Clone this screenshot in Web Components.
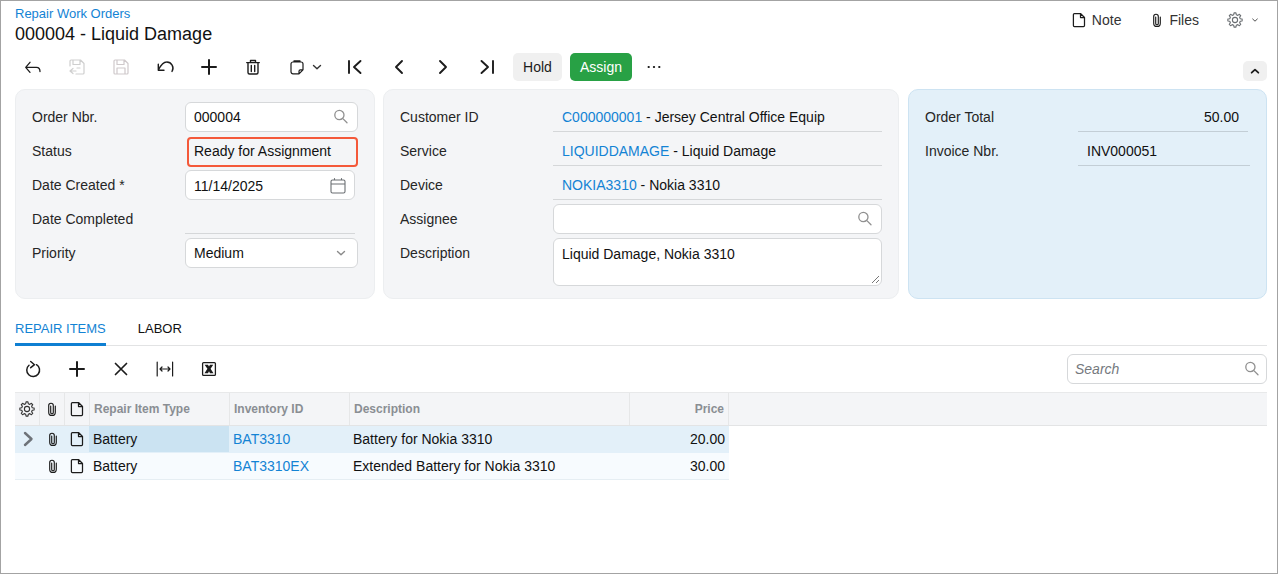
<!DOCTYPE html>
<html lang="en"><head><meta charset="utf-8"><title>Repair Work Orders</title>
<style>
html,body{margin:0;padding:0;background:#fff}
body{font:14px/18px "Liberation Sans",Arial,sans-serif;color:#1c1c1c}
</style></head><body>
<x-app>
  <x-header slot="header"></x-header>
  <x-toolbar slot="toolbar"></x-toolbar>
  <x-summary slot="summary"></x-summary>
  <x-tabs slot="tabs"></x-tabs>
  <x-grid-toolbar slot="gridbar"></x-grid-toolbar>
  <x-grid slot="grid"></x-grid>
</x-app>
<script>
const gear=(()=>{let d='';const n=8,c=12,R=7.2,r=5.4;for(let i=0;i<n;i++){const a=i*2*Math.PI/n;const w=Math.PI/n;
const pts=[[r,a-w*.62],[R,a-w*.34],[R,a+w*.34],[r,a+w*.62]];
pts.forEach((p,j)=>{const x=(c+p[0]*Math.cos(p[1])).toFixed(2),y=(c+p[0]*Math.sin(p[1])).toFixed(2);d+=(i==0&&j==0?'M':'L')+x+' '+y+' ';});}
return d+'Z M14.6 12a2.6 2.6 0 1 1-5.2 0a2.6 2.6 0 1 1 5.2 0Z';})();
const ICONS={
 back:{d:'M9 7.3 L4.7 12.3 L9 17.3 M4.7 12.3 H15.5 Q19 12.3 19 16.5',w:1.3},
 saveclose:{d:'M11 19 H18 A1 1 0 0 0 19 18 V8.5 L15.5 5 H6 A1 1 0 0 0 5 6 V11 M8 5 V9.5 H15 V5 M12 13 H15 M8 13.5 L5 16 L8 18.5 M5 16 H11',w:1.2},
 save:{d:'M6 19 H18 A1 1 0 0 0 19 18 V8.5 L15.5 5 H6 A1 1 0 0 0 5 6 V18 A1 1 0 0 0 6 19Z M8 5 V9.5 H15 V5 M8 19 V13 H16 V19',w:1.2},
 undo:{d:'M19 16.5 A6.2 6.2 0 0 0 13.5 7 C10.5 7 8 10 5.6 14.5 M5.3 9.3 V15.3 H11',w:1.4},
 plus:{d:'M12 5 V19 M5 12 H19',w:2},
 trash:{d:'M7 8.5 V17.5 A1.5 1.5 0 0 0 8.5 19 H15.5 A1.5 1.5 0 0 0 17 17.5 V8.5 M5.7 7.6 H18.3 M9.5 7.6 V5.5 H14.5 V7.6 M10.3 10.5 V16.5 M13.7 10.5 V16.5',w:1.4},
 paste:{d:'M8 7 H16 A2 2 0 0 1 18 9 V14.8 L14 18.8 H8 A2 2 0 0 1 6 16.8 V9 A2 2 0 0 1 8 7 Z M9 7 V5.8 H15 V7 M14 18.8 V16.2 A1.4 1.4 0 0 1 15.4 14.8 H18',w:1.2},
 chev:{d:'M8.5 10.5 L12 13.8 L15.5 10.5',w:1.4},
 first:{d:'M6 6 V18 M17.5 6 L11 12 L17.5 18',w:1.9},
 prev:{d:'M15 6 L9 12 L15 18',w:1.9},
 next:{d:'M9 6 L15 12 L9 18',w:1.9},
 last:{d:'M18 6 V18 M6.5 6 L13 12 L6.5 18',w:1.9},
 dots:{d:'M6.5 12 h.4 M11.8 12 h.4 M17.1 12 h.4',w:1.9},
 up:{d:'M8 14 L12 10.4 L16 14',w:2.2},
 search:{d:'M13.9 13.6 L18 17.7 M15 10 A4.6 4.6 0 1 1 5.8 10 A4.6 4.6 0 1 1 15 10Z',w:1.3},
 cal:{d:'M6.5 6 H17.5 A1.5 1.5 0 0 1 19 7.5 V17.5 A1.5 1.5 0 0 1 17.5 19 H6.5 A1.5 1.5 0 0 1 5 17.5 V7.5 A1.5 1.5 0 0 1 6.5 6Z M5 10 H19 M8.5 4.5 V6 M15.5 4.5 V6',w:1.1},
 refresh:{d:'M15.5 7.7 A6.4 6.4 0 1 1 8 8.3 M9.7 4.5 L13.5 7.7 L9.7 10.7',w:1.5},
 close:{d:'M6.5 6.5 L17.5 17.5 M17.5 6.5 L6.5 17.5',w:1.7},
 fit:{d:'M4.2 5 V19 M19.6 5 V19 M7 12 H17 M9 10 L7 12 L9 14 M15 10 L17 12 L15 14',w:1.2},
 clip:{d:'M10.7 9 V15.5 a1.3 1.3 0 0 0 2.6 0 V8.5 a2.3 2.3 0 0 0 -4.6 0 V15.2 a3.3 3.3 0 0 0 6.6 0 V9',w:1.15},
 note:{d:'M7.4 5.5 H13.5 L17.5 9.5 V17.5 A1 1 0 0 1 16.5 18.5 H7.4 A1 1 0 0 1 6.4 17.5 V6.5 A1 1 0 0 1 7.4 5.5Z M13.5 5.5 V9.5 H17.5',w:1.25},
 gear:{d:gear,w:1.1},
 rowchev:{d:'M9 6 L15.5 12 L9 18',w:2.4}
};
class XIcon extends HTMLElement{connectedCallback(){
 const i=ICONS[this.getAttribute('name')],s=this.getAttribute('size')||24,c=this.getAttribute('color')||'#1c1c1c';
 this.attachShadow({mode:'open'}).innerHTML=`<style>:host{display:inline-flex;width:${s}px;height:${s}px;flex:none}svg{display:block}</style><svg width="${s}" height="${s}" viewBox="0 0 24 24"><path d="${i.d}" fill="none" stroke="${c}" stroke-width="${i.w}" stroke-linecap="round" stroke-linejoin="round"/></svg>`;
}}
class XExcel extends HTMLElement{connectedCallback(){this.attachShadow({mode:'open'}).innerHTML=`<style>:host{display:inline-flex;width:24px;height:24px}</style><svg width="24" height="24" viewBox="0 0 24 24"><rect x="5.6" y="5.6" width="12.8" height="12.8" rx="1" fill="#fff" stroke="#1c1c1c" stroke-width="1.3"/><path d="M7.6 7.8 H11 L12 9.6 L13 7.8 H16.2 L13.6 11.8 L16.5 16.2 H13 L12 14.2 L11 16.2 H7.5 L10.4 11.8 Z" fill="#1c1c1c"/></svg>`}}
customElements.define('x-icon',XIcon);customElements.define('x-excel',XExcel);

class XApp extends HTMLElement{constructor(){super();this.attachShadow({mode:'open'}).innerHTML=`<style>
:host{display:block;box-sizing:border-box;width:1278px;height:574px;border:1px solid #a3a3a3;padding:0 10px 0 14px;overflow:hidden}
.sum{display:block;margin-top:8px}
</style><slot name="header"></slot><slot name="toolbar"></slot><div class="sum"><slot name="summary"></slot></div><slot name="tabs"></slot><slot name="gridbar"></slot><slot name="grid"></slot>`}}
customElements.define('x-app',XApp);

class XHeader extends HTMLElement{constructor(){super();this.attachShadow({mode:'open'}).innerHTML=`<style>
:host{display:flex;justify-content:space-between;height:52px}
.crumb{font-size:13px;line-height:16px;color:#1383d4;margin-top:5px}
h1{font-size:18px;line-height:24px;font-weight:400;margin:0;color:#111}
.r{display:flex;align-items:center;height:24px;margin-top:7px;margin-right:4px}
.i{display:flex;align-items:center;color:#333}
</style><div><div class="crumb">Repair Work Orders</div><h1>000004 - Liquid Damage</h1></div>
<div class="r"><span class="i" style="margin-right:24px"><x-icon name="note"></x-icon><span style="margin-left:1px">Note</span></span>
<span class="i" style="margin-right:24px"><x-icon name="clip"></x-icon><span>Files</span></span>
<x-icon name="gear" color="#6a6e72"></x-icon><x-icon name="chev" size="16" color="#444"></x-icon></div>`}}
customElements.define('x-header',XHeader);

const BTN=`.b{width:44px;height:28px;display:flex;align-items:center;justify-content:center;flex:none}`;
class XToolbar extends HTMLElement{constructor(){super();this.attachShadow({mode:'open'}).innerHTML=`<style>
:host{display:flex;align-items:center;height:28px;margin-left:-4px}
${BTN}
.t{height:28px;box-sizing:border-box;border-radius:5px;display:flex;align-items:center;justify-content:center;background:#f0f0f0;color:#1c1c1c}
.g{background:#28a145;color:#fff}
.up{width:24px;height:20px;margin-top:8px;margin-left:auto;background:#f0f0f0;border-radius:5px;display:flex;align-items:center;justify-content:center}
</style>
<div class="b"><x-icon name="back"></x-icon></div>
<div class="b"><x-icon name="saveclose" color="#cfcfcf"></x-icon></div>
<div class="b"><x-icon name="save" color="#cfc9cb"></x-icon></div>
<div class="b"><x-icon name="undo"></x-icon></div>
<div class="b"><x-icon name="plus"></x-icon></div>
<div class="b"><x-icon name="trash"></x-icon></div>
<div class="b" style="width:58px;justify-content:flex-start;padding-left:10px;box-sizing:border-box"><x-icon name="paste"></x-icon><x-icon name="chev" color="#333" style="margin-left:-4px"></x-icon></div>
<div class="b"><x-icon name="first"></x-icon></div>
<div class="b"><x-icon name="prev"></x-icon></div>
<div class="b"><x-icon name="next"></x-icon></div>
<div class="b"><x-icon name="last"></x-icon></div>
<div class="t" style="width:49px;margin-left:4px">Hold</div>
<div class="t g" style="width:62px;margin-left:8px">Assign</div>
<div class="b"><x-icon name="dots"></x-icon></div>
<div class="up"><x-icon name="up" size="20"></x-icon></div>`}}
customElements.define('x-toolbar',XToolbar);

class XPanel extends HTMLElement{constructor(){super();this.attachShadow({mode:'open'}).innerHTML=`<style>
:host{display:block;box-sizing:border-box;height:210px;background:#f4f5f7;border:1px solid #eceef0;border-radius:10px;padding:10px 16px}
:host([blue]){background:#e3f0f9;border-color:#cde3f2}
</style><slot></slot>`}}
customElements.define('x-panel',XPanel);

class XField extends HTMLElement{constructor(){super();this.attachShadow({mode:'open'}).innerHTML=`<style>
:host{display:grid;grid-template-columns:153px 1fr;min-height:34px;color:#262626}
.l{line-height:34px;height:34px}
.v{min-width:0;color:#111}
</style><div class="l"></div><div class="v"><slot></slot></div>`}
connectedCallback(){this.shadowRoot.querySelector('.l').textContent=this.getAttribute('label')}}
customElements.define('x-field',XField);

class XBox extends HTMLElement{constructor(){super();this.attachShadow({mode:'open'}).innerHTML=`<style>
:host{display:flex;align-items:center;justify-content:space-between;box-sizing:border-box;height:30px;margin-top:2px;background:#fff;border:1px solid #d6d8da;border-radius:6px;padding:0 8px;color:#111}
:host([line]){background:none;border:0;border-bottom:1px solid #d5d7d9;border-radius:0;padding:0 9px;height:30px;justify-content:flex-start;white-space:pre}
:host([line][dark]){border-bottom-color:#c3ced6}
:host([status]){border:2px solid #f4593a;margin:3px 0 0 2px;padding:0 5px 2px;background:#f4f5f7;border-radius:4px}
:host([date]){padding-top:1px}
:host([area]){height:48px;align-items:flex-start;padding-top:6px;position:relative}
::slotted(a){color:#1383d4;text-decoration:none}
svg{position:absolute;right:1px;bottom:1px}
</style><slot></slot>`;
}connectedCallback(){if(this.hasAttribute('area')){const s=document.createElementNS('http://www.w3.org/2000/svg','svg');s.setAttribute('width','9');s.setAttribute('height','9');s.innerHTML='<path d="M1 8 L8 1 M5 8 L8 5" stroke="#777" stroke-width="1"/>';this.shadowRoot.appendChild(s)}}}
customElements.define('x-box',XBox);

class XSummary extends HTMLElement{constructor(){super();this.attachShadow({mode:'open'}).innerHTML=`<style>
:host{display:grid;grid-template-columns:360px 516px 359px;column-gap:8px}
.c{margin-left:1px}
x-box>x-icon{margin:0 -4px 0 0}
</style>
<x-panel>
 <x-field label="Order Nbr."><x-box>000004<x-icon name="search" color="#909090"></x-icon></x-box></x-field>
 <x-field label="Status"><x-box status>Ready for Assignment</x-box></x-field>
 <x-field label="Date Created *"><x-box date style="width:170px">11/14/2025<x-icon name="cal" color="#6b6f73"></x-icon></x-box></x-field>
 <x-field label="Date Completed"><x-box line style="width:170px"></x-box></x-field>
 <x-field label="Priority"><x-box>Medium<x-icon name="chev" color="#8a8a8a"></x-icon></x-box></x-field>
</x-panel>
<x-panel>
 <x-field label="Customer ID"><x-box line><a>C000000001</a> - Jersey Central Office Equip</x-box></x-field>
 <x-field label="Service"><x-box line><a>LIQUIDDAMAGE</a> - Liquid Damage</x-box></x-field>
 <x-field label="Device"><x-box line><a>NOKIA3310</a> - Nokia 3310</x-box></x-field>
 <x-field label="Assignee"><x-box><span></span><x-icon name="search" color="#909090"></x-icon></x-box></x-field>
 <x-field label="Description"><x-box area>Liquid Damage, Nokia 3310</x-box></x-field>
</x-panel>
<x-panel blue class="c" style="width:359px">
 <x-field label="Order Total"><x-box line dark style="width:170px;justify-content:flex-end">50.00</x-box></x-field>
 <x-field label="Invoice Nbr."><x-box line dark>INV000051</x-box></x-field>
</x-panel>`}}
customElements.define('x-summary',XSummary);

class XTabs extends HTMLElement{constructor(){super();this.attachShadow({mode:'open'}).innerHTML=`<style>
:host{display:flex;align-items:flex-end;height:47px;box-sizing:border-box;border-bottom:1px solid #e2e3e4;gap:32px;font-size:13px}
.t{height:18px;padding-bottom:8px;margin-bottom:-1px;line-height:18px;color:#111}
.a{color:#1383d4;border-bottom:3px solid #0e7fd2;border-radius:2px 2px 0 0;padding-bottom:5px}
</style><div class="t a">REPAIR ITEMS</div><div class="t">LABOR</div>`}}
customElements.define('x-tabs',XTabs);

class XGridToolbar extends HTMLElement{constructor(){super();this.attachShadow({mode:'open'}).innerHTML=`<style>
:host{display:flex;align-items:center;height:30px;margin:8px 0 8px -4px}
${BTN}
.s{margin-left:auto;width:200px;height:30px;box-sizing:border-box;border:1px solid #d6d8da;border-radius:6px;display:flex;align-items:center;justify-content:space-between;padding:0 2px 0 7px;font-style:italic;color:#75797e}
</style>
<div class="b"><x-icon name="refresh"></x-icon></div>
<div class="b"><x-icon name="plus"></x-icon></div>
<div class="b"><x-icon name="close"></x-icon></div>
<div class="b"><x-icon name="fit"></x-icon></div>
<div class="b"><x-excel></x-excel></div>
<div class="s">Search<x-icon name="search" color="#909090"></x-icon></div>`}}
customElements.define('x-grid-toolbar',XGridToolbar);

class XGrid extends HTMLElement{constructor(){super();
const clip='<x-icon name="clip"></x-icon>',note='<x-icon name="note"></x-icon>';
this.attachShadow({mode:'open'}).innerHTML=`<style>
:host{display:block}
.r{display:grid;grid-template-columns:25px 25px 24px 140px 121px 280px 99px;width:714px}
.h{width:auto;grid-template-columns:25px 25px 25px 140px 120px 280px 99px 1fr;background:#f4f5f7;height:34px;box-sizing:border-box;border-top:1px solid #e8e9ea;border-bottom:1px solid #e3e4e5}
.h>div{border-right:1px solid #e6e7e8;display:flex;align-items:center;font-size:12px;font-weight:700;color:#8a8e93;padding:0 3px 0 4px;box-sizing:border-box}
.h>div:last-child{border:0}
.ic{justify-content:center;padding:0!important}
.d{height:27px;box-sizing:border-box}
.d>div{display:flex;align-items:center;padding:0 4px;box-sizing:border-box;color:#111;white-space:nowrap}
.s{background:#e3f0f9;border-bottom:1px solid #e3f0f9}
.n{background:#f7fbfe;border-bottom:1px solid #e6eef3}
.sel{background:#cbe3f2}
a{color:#1383d4;text-decoration:none}
.num{justify-content:flex-end}
.h .num{padding-right:4px}
.desc{padding-left:3px!important}
</style>
<div class="r h"><div class="ic"><x-icon name="gear" color="#333"></x-icon></div><div class="ic">${clip}</div><div class="ic">${note}</div><div>Repair Item Type</div><div>Inventory ID</div><div>Description</div><div class="num">Price</div><div></div></div>
<div class="r d s"><div class="ic"><x-icon name="rowchev" color="#6d7278"></x-icon></div><div class="ic">${clip}</div><div class="ic">${note}</div><div class="sel">Battery</div><div><a>BAT3310</a></div><div class="desc">Battery for Nokia 3310</div><div class="num">20.00</div></div>
<div class="r d n"><div></div><div class="ic">${clip}</div><div class="ic">${note}</div><div>Battery</div><div><a>BAT3310EX</a></div><div class="desc">Extended Battery for Nokia 3310</div><div class="num">30.00</div></div>`}}
customElements.define('x-grid',XGrid);
</script>
</body></html>
